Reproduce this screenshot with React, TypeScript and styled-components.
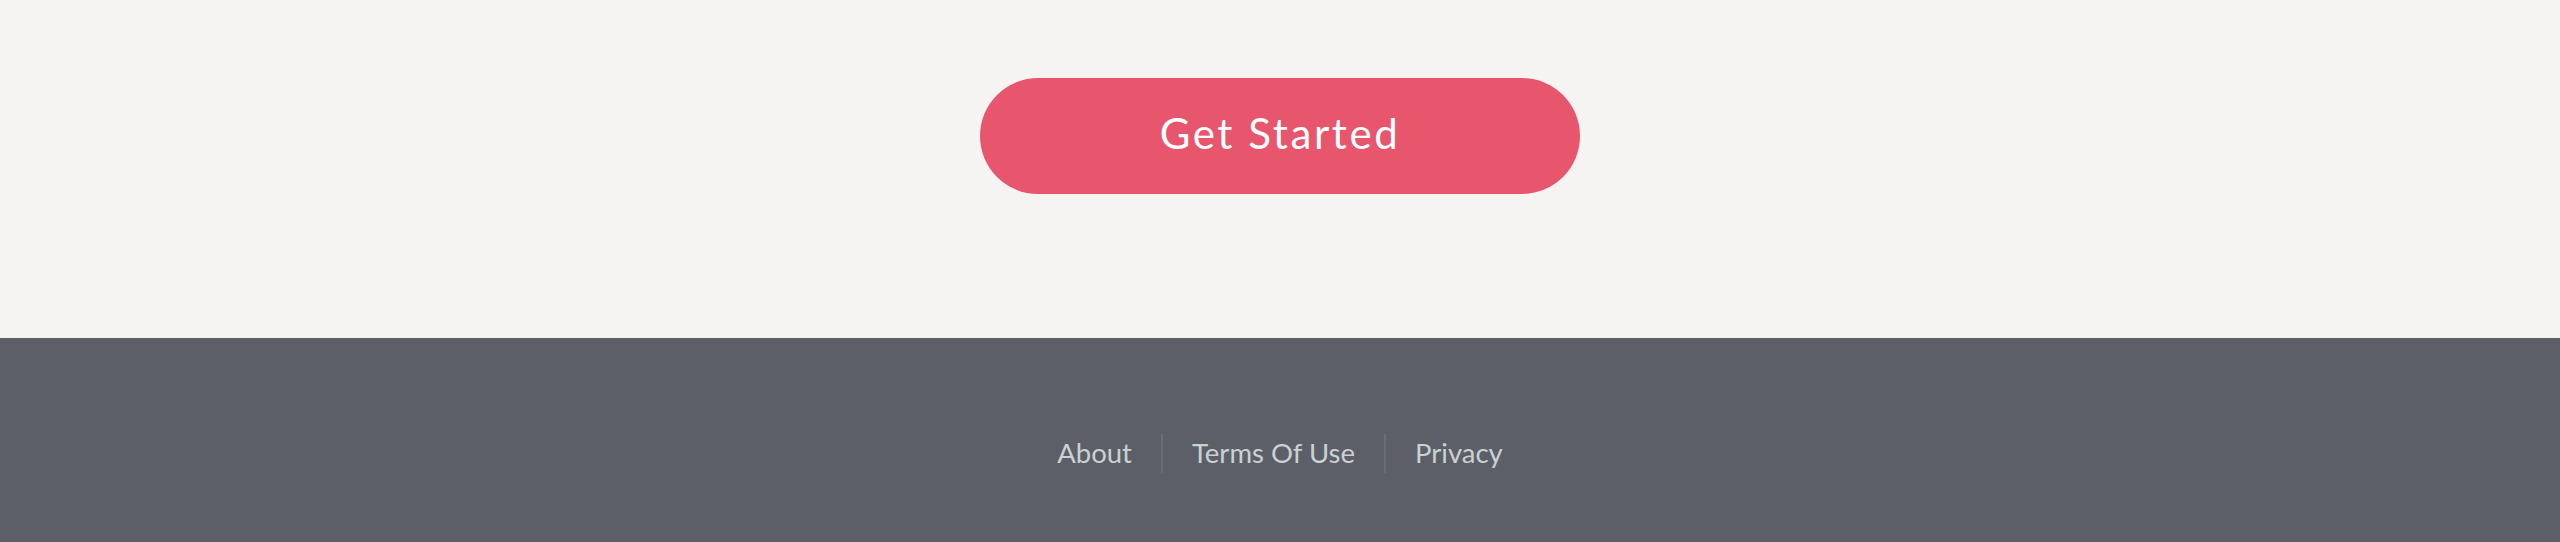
import React from 'react';
import styled, { createGlobalStyle } from 'styled-components';

const GlobalStyle = createGlobalStyle`
  html, body {
    margin: 0;
    padding: 0;
    background: #5c5f67;
  }
  body {
    font-family: Lato, "Open Sans", "Liberation Sans", sans-serif;
  }
`;

const Hero = styled.section`
  box-sizing: border-box;
  height: 338px;
  background-color: #f5f4f2;
  display: flex;
  justify-content: center;
  padding-top: 78px;
`;

const StartButton = styled.button`
  box-sizing: border-box;
  width: 600px;
  height: 116px;
  border: 0;
  border-radius: 58px;
  background-color: #e8566d;
  color: #ffffff;
  font-family: Lato, "Open Sans", sans-serif;
  font-size: 42px;
  font-weight: 400;
  letter-spacing: 2.6px;
  padding: 0 0 6px;
  cursor: pointer;
`;

const Footer = styled.footer`
  box-sizing: border-box;
  height: 204px;
  background-color: #5c5f67;
  display: flex;
  justify-content: center;
  padding-top: 96px;
`;

const LinkList = styled.nav`
  display: flex;
  align-items: flex-start;
  height: 39px;
`;

const FooterLink = styled.a<{ first?: boolean }>`
  display: block;
  height: 39px;
  line-height: 38px;
  padding: 0 29px;
  border-left: ${(props) => (props.first ? 'none' : '2px solid #696e70')};
  color: #c9d2d2;
  font-size: 27.5px;
  text-decoration: none;
`;

const links = ['About', 'Terms Of Use', 'Privacy'];

export default function App() {
  return (
    <>
      <GlobalStyle />
      <Hero>
        <StartButton>Get Started</StartButton>
      </Hero>
      <Footer>
        <LinkList>
          {links.map((label, i) => (
            <FooterLink key={label} href="#" first={i === 0}>
              {label}
            </FooterLink>
          ))}
        </LinkList>
      </Footer>
    </>
  );
}
